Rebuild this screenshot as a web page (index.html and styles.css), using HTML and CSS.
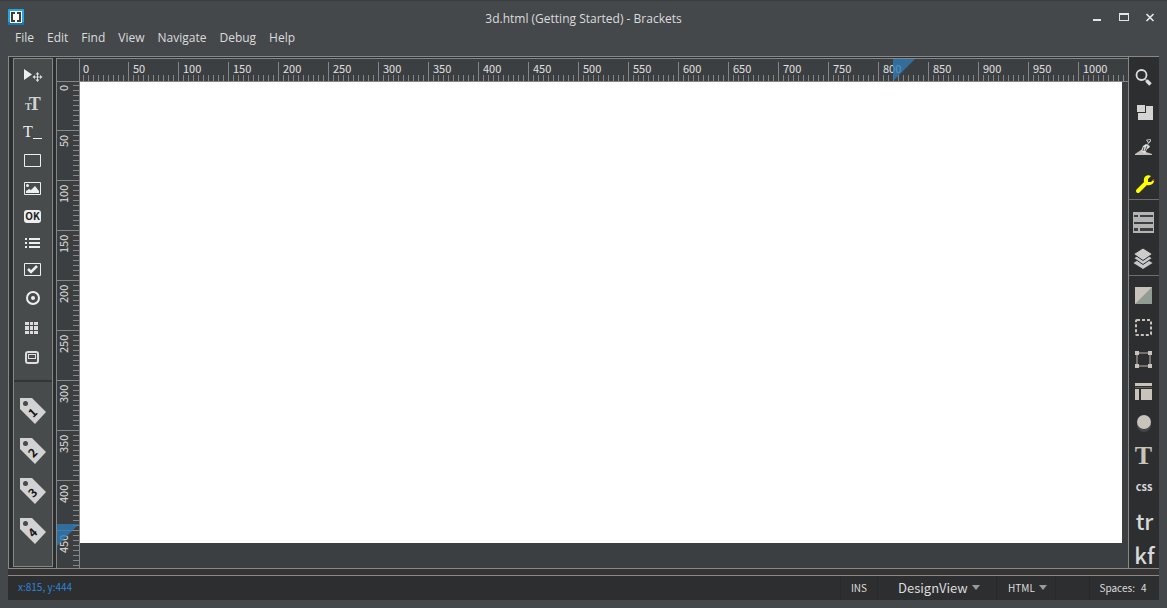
FILE: index.html
```
<!DOCTYPE html>
<html lang="en">
<head>
<meta charset="utf-8">
<title>3d.html (Getting Started) - Brackets</title>
<link rel="stylesheet" href="styles.css">
</head>
<body>
<header class="titlebar">
  <svg class="logo" width="16" height="16" viewBox="0 0 16 16"><rect width="16" height="16" rx="1" fill="#22a5e0"/><rect y="13" width="16" height="3" rx="1" fill="#0f78b8"/><rect x="2" y="2" width="12" height="12" fill="#fff"/><path d="M3 3h4v2H5v6h2v2H3zM13 3H9v2h2v6H9v2h4z" fill="#383c3e"/></svg>
  <h1 class="title">3d.html (Getting Started) - Brackets</h1>
  <div class="window-buttons">
    <button aria-label="Minimize"><svg width="12" height="12" viewBox="0 0 12 12"><path d="M3 8h8v2H3z" fill="#e4e4e4"/></svg></button>
    <button aria-label="Maximize"><svg width="12" height="12" viewBox="0 0 12 12"><path d="M2 2h10v8H2zM3 4v5h8V4z" fill="#e4e4e4" fill-rule="evenodd"/></svg></button>
    <button aria-label="Close"><svg width="12" height="12" viewBox="0 0 12 12"><path d="M2.500 3l7 7M9.500 3l-7 7" stroke="#e4e4e4" stroke-width="1.700"/></svg></button>
  </div>
</header>
<nav class="menu">
  <a href="#">File</a><a href="#">Edit</a><a href="#">Find</a><a href="#">View</a><a href="#">Navigate</a><a href="#">Debug</a><a href="#">Help</a>
</nav>

<main class="workspace">
  <aside class="toolbox">
    <div class="tools">
      <button aria-label="Select"><svg viewBox="0 0 38 28"><path d="M10 8v11l8-5.500z" fill="#eee"/><path d="M23.500 12.500v7M20 16h7" stroke="#ddd"/><path d="M23.500 11l2 2.500h-4zM23.500 21l2-2.500h-4zM18.500 16l2.500-2v4zM28.500 16l-2.500-2v4z" fill="#ddd"/></svg></button>
      <button aria-label="Text size"><svg viewBox="0 0 38 28"><text x="11" y="21" class="serif-glyph"><tspan font-size="10">T</tspan><tspan font-size="18" dx="-3">T</tspan></text></svg></button>
      <button aria-label="Text input"><svg viewBox="0 0 38 28"><text x="9" y="20" class="serif-light">T</text><path d="M19 21h9v1h-9z" fill="#eee"/></svg></button>
      <button aria-label="Box"><svg viewBox="0 0 38 28"><path d="M10.500 9.500h16v12h-16z" fill="none" stroke="#eee"/></svg></button>
      <button aria-label="Image"><svg viewBox="0 0 38 28"><path d="M10.500 9.500h16v12h-16z" fill="none" stroke="#eee"/><circle cx="13.500" cy="12.500" r="1.500" fill="#eee"/><path d="M12 20v-2l3-2 2 1 4-4 4 5v2z" fill="#eee"/></svg></button>
      <button aria-label="Button"><svg viewBox="0 0 38 28"><rect x="10" y="9" width="17" height="13" rx="3" fill="#eee"/><text x="18.500" y="19" class="ok-glyph" text-anchor="middle">OK</text></svg></button>
      <button aria-label="List"><svg viewBox="0 0 38 28"><path d="M11 9h2v2h-2zM11 13h2v2h-2zM11 17h2v2h-2zM15 9h11v2H15zM15 13h11v2H15zM15 17h11v2H15z" fill="#eee"/></svg></button>
      <button aria-label="Checkbox"><svg viewBox="0 0 38 28"><path d="M10.500 6.500h16v12h-16z" fill="none" stroke="#eee"/><path d="M14 12l3 3 6-6" fill="none" stroke="#eee" stroke-width="2.500"/></svg></button>
      <button aria-label="Radio"><svg viewBox="0 0 38 28"><circle cx="19" cy="13" r="6" fill="none" stroke="#eee" stroke-width="2"/><circle cx="19" cy="13" r="2" fill="#eee"/></svg></button>
      <button aria-label="Grid"><svg viewBox="0 0 38 28"><path d="M11 9h4v3h-4zM16 9h3v3h-3zM20 9h4v3h-4zM11 13h4v4h-4zM16 13h3v4h-3zM20 13h4v4h-4zM11 18h4v3h-4zM16 18h3v3h-3zM20 18h4v3h-4z" fill="#ddd"/></svg></button>
      <button aria-label="Container"><svg viewBox="0 0 38 28"><rect x="12" y="11" width="12" height="11" rx="2" fill="none" stroke="#ddd" stroke-width="2"/><rect x="14.500" y="13.500" width="7" height="4" fill="none" stroke="#ddd"/></svg></button>
    </div>
    <div class="tags">
      <button aria-label="Tag 1"><svg viewBox="0 0 38 40"><path d="M6 7h12l14 14-11 12L6 18z" fill="#d2d2d2"/><circle cx="11.500" cy="12.500" r="2.500" fill="#45494a"/><text x="19" y="26" transform="rotate(-45 19 22)" class="tag-number">1</text></svg></button>
      <button aria-label="Tag 2"><svg viewBox="0 0 38 40"><path d="M6 7h12l14 14-11 12L6 18z" fill="#d2d2d2"/><circle cx="11.500" cy="12.500" r="2.500" fill="#45494a"/><text x="19" y="26" transform="rotate(-45 19 22)" class="tag-number">2</text></svg></button>
      <button aria-label="Tag 3"><svg viewBox="0 0 38 40"><path d="M6 7h12l14 14-11 12L6 18z" fill="#d2d2d2"/><circle cx="11.500" cy="12.500" r="2.500" fill="#45494a"/><text x="19" y="26" transform="rotate(-45 19 22)" class="tag-number">3</text></svg></button>
      <button aria-label="Tag 4"><svg viewBox="0 0 38 40"><path d="M6 7h12l14 14-11 12L6 18z" fill="#d2d2d2"/><circle cx="11.500" cy="12.500" r="2.500" fill="#45494a"/><text x="19" y="26" transform="rotate(-45 19 22)" class="tag-number">4</text></svg></button>
    </div>
  </aside>

  <section class="design">
    <div class="corner"></div>
    <div class="ruler ruler-x">
      <span>0</span><span>50</span><span>100</span><span>150</span><span>200</span><span>250</span><span>300</span><span>350</span><span>400</span><span>450</span><span>500</span><span>550</span><span>600</span><span>650</span><span>700</span><span>750</span><span>800</span><span>850</span><span>900</span><span>950</span><span>1000</span>
      <i class="marker marker-x"></i>
    </div>
    <div class="ruler ruler-y">
      <span>0</span><span>50</span><span>100</span><span>150</span><span>200</span><span>250</span><span>300</span><span>350</span><span>400</span><span>450</span>
      <i class="marker marker-y"></i>
    </div>
    <div class="stage"><div class="canvas"></div></div>
  </section>

  <aside class="panel">
    <div class="group views">
      <button aria-label="Search"><svg viewBox="0 0 30 35"><circle cx="12.500" cy="16" r="5" fill="none" stroke="#ddd" stroke-width="1.800"/><path d="M16 20l2 2" stroke="#aaa" stroke-width="1.500"/><path d="M17.500 21.500l4 4" stroke="#ddd" stroke-width="3.500"/></svg></button>
      <button aria-label="Arrange"><svg viewBox="0 0 30 35"><path d="M8 11h8v7H8zM17 12h7v14H9v-7h8z" fill="#d4d4d4"/></svg></button>
      <button aria-label="Build"><svg viewBox="0 0 30 35"><path d="M6 26v-1l3-2 3-2 5 2 6 2v1z" fill="#c4c0bb"/><path d="M12 22l2-5 3-2 4 2-1 2-2 1-2 5z" fill="#dcdcdc"/><path d="M15 18l-1 4M18 17l-2 5" stroke="#555"/><path d="M18.500 16l2-4M17.500 11l4-.5v2l-2 1.500z" fill="none" stroke="#bbb"/></svg></button>
      <button aria-label="Settings"><svg viewBox="0 0 30 35"><path d="M9 27l8-8" stroke="#ff0" stroke-width="4" stroke-linecap="round"/><path d="M15 18c-1-5 3-8 7-6l-3 3v3h3l3-3c1 4-3 7-7 6z" fill="#ff0"/><path d="M24 15h1v2h-1z" fill="#e32"/></svg></button>
    </div>
    <div class="group lists">
      <button aria-label="Properties"><svg viewBox="0 0 30 36"><path d="M4 9h21v21H4z" fill="#b4b4b4"/><path d="M5 12h4v2H5zM11 12h13v2H11zM5 19h19v2H5zM5 25h4v3H5zM11 25h13v3H11z" fill="#3c3e3f"/></svg></button>
      <button aria-label="Layers"><svg viewBox="0 0 30 36"><path d="M4.500 24l9.500-6 9.500 6-9.500 6z" fill="#c8c8c8"/><path d="M4.500 19l9.500-5 9.500 5-9.500 6.500z" fill="#c8c8c8" stroke="#2d2e30"/><path d="M4.500 15L14 9l9.500 6-9.500 6.500z" fill="#ccc" stroke="#2d2e30"/></svg></button>
    </div>
    <div class="group styles">
      <button aria-label="Background"><svg viewBox="0 0 30 32"><path d="M6 8h17v17H6z" fill="#c8c4bc"/><path d="M23 8v17H6z" fill="#919c93"/></svg></button>
      <button aria-label="Border"><svg viewBox="0 0 30 32"><rect x="7" y="9" width="15" height="15" rx="1" fill="none" stroke="#c8c4bc" stroke-width="2" stroke-dasharray="3 2"/></svg></button>
      <button aria-label="Transform"><svg viewBox="0 0 30 32"><path d="M8 10h13v13H8z" fill="none" stroke="#8b8985" stroke-width="1.500"/><path d="M6 8h4v4H6zM19 8h4v4h-4zM6 21h4v4H6zM19 21h4v4h-4z" fill="#c8c4bc"/></svg></button>
      <button aria-label="Layout"><svg viewBox="0 0 30 32"><path d="M6 8h17v3H6zM6 14h4v11H6zM12 14h11v11H12z" fill="#c8c4bc"/><path d="M6 12h17v1H6z" fill="#5e5e5c"/></svg></button>
      <button aria-label="Shape"><svg viewBox="0 0 30 32"><circle cx="15" cy="18" r="7" fill="#424749"/><circle cx="15" cy="15" r="7" fill="#c8c4bc"/></svg></button>
      <button aria-label="Typography"><svg viewBox="0 0 30 32"><text x="14.500" y="25" text-anchor="middle" class="type-glyph">T</text></svg></button>
      <button class="label-css">css</button>
      <button class="label-large">tr</button>
      <button class="label-large">kf</button>
    </div>
  </aside>
</main>

<footer class="status">
  <span class="position">x:815, y:444</span>
  <span class="cell insert">INS</span>
  <label class="cell view"><select aria-label="View"><option>DesignView</option></select></label>
  <label class="cell language"><select aria-label="Language"><option>HTML</option></select></label>
  <span class="cell blank"></span>
  <span class="cell spaces"><span>Spaces:</span><span>4</span></span>
</footer>
</body>
</html>
```

FILE: styles.css
```
* { box-sizing: border-box; }
body {
  margin: 0;
  height: 100vh;
  padding: 0 8px 8px;
  display: flex;
  flex-direction: column;
  background: #44484b;
  border-top: 1px solid #3a3d3f;
  color: #dcdcdc;
  font: 12px/16px "Open Sans", sans-serif;
}
button, select {
  margin: 0;
  padding: 0;
  border: 0;
  background: none;
  color: inherit;
  font: inherit;
}
button { display: block; }
svg { display: block; }

.titlebar {
  display: grid;
  grid-template-columns: 1fr auto 1fr;
  align-items: center;
  height: 29px;
  padding-top: 2px;
}
.title { margin: 0; font-size: 12px; font-weight: 400; padding-top: 5px; }
.window-buttons { display: flex; justify-content: flex-end; gap: 15px; padding-right: 3px; }
.menu { display: flex; gap: 13px; height: 26px; padding: 0 7px; }
.menu a { color: inherit; text-decoration: none; }

.workspace {
  flex: 1;
  min-height: 0;
  display: flex;
  border: solid #888;
  border-width: 1px 0 0 1px;
  background: #2d2e30;
}
.toolbox {
  width: 40px;
  margin: 1px 3px 1px 4px;
  border: 1px solid #858787;
  background: #474b4b;
}
.tools { padding: 2px 0 11px; border-bottom: 2px solid #333637; }
.tools button, .tools svg { width: 38px; height: 28px; }
.tags { padding-top: 9px; }
.tags button, .tags svg { width: 38px; height: 40px; }
.serif-glyph { font-family: "Liberation Serif", serif; font-weight: 700; fill: #d0d3d3; }
.serif-light { font: 16px "Liberation Serif", serif; fill: #eee; }
.ok-glyph { font: 700 10px "Noto Sans CJK SC", sans-serif; fill: #222; }
.tag-number { font: 700 12px "Noto Sans CJK SC", sans-serif; fill: #151515; text-anchor: middle; }

.design {
  flex: 1;
  min-width: 0;
  margin-top: 1px;
  display: grid;
  grid-template: 23px minmax(0, 1fr) / 23px minmax(0, 1fr);
  border: solid #858787;
  border-width: 1px 0 0 1px;
  background: #3c3f41;
}
.corner { border: solid #858787; border-width: 0 1px 1px 0; }
.ruler {
  position: relative;
  display: flex;
  color: #e0e0e0;
  font: 11px/12px "Noto Sans CJK SC", sans-serif;
}
.ruler span { flex: 0 0 50px; }
.ruler span:first-of-type { flex-basis: 48px; }
.ruler-x {
  overflow: hidden;
  border-bottom: 1px solid #858787;
  padding-top: 3px;
  background: repeating-linear-gradient(to right, transparent 0 3px, #858787 3px 4px, transparent 4px 5px) 0 100% / 100% 6px no-repeat;
}
.ruler-x span { padding-left: 4px; border-left: 1px solid #858787; }
.ruler-x span:first-of-type { border-left: 0; padding-left: 3px; }
.ruler-y {
  flex-direction: column;
  border-right: 1px solid #858787;
  background: repeating-linear-gradient(to bottom, transparent 0 3px, #858787 3px 4px, transparent 4px 5px) 100% 0 / 6px 100% no-repeat;
}
.ruler-y span {
  writing-mode: vertical-rl;
  transform: rotate(180deg);
  padding-bottom: 4px;
  border-bottom: 1px solid #858787;
  text-align: end;
}
.ruler-y span:first-of-type { border-bottom: 0; padding-bottom: 3px; }
.ruler-y span:last-of-type { flex: 1 1 0; min-height: 0; }
.marker {
  position: absolute;
  width: 22px;
  height: 22px;
  background: #2e7ab5;
  opacity: .8;
  clip-path: polygon(0 0, 100% 0, 0 100%);
}
.marker-x { left: 813px; top: 0; }
.marker-y { left: 0; top: 442px; }
.stage { display: flex; padding: 0 6px 25px 0; }
.canvas { flex: 1; background: #fff; }

.panel {
  width: 31px;
  border-left: 1px solid #888;
  color: #d8d8d8;
  overflow: hidden;
}
.group { border-bottom: 1px solid #6c6e6f; }
.views { padding-top: 2px; }
.views button, .views svg { width: 30px; height: 35px; }
.lists { padding-top: 3px; }
.lists button, .lists svg { width: 30px; height: 36px; }
.styles { padding-top: 3px; border: 0; }
.styles button, .styles svg { width: 30px; height: 32px; }
.type-glyph { font: 700 26px "Liberation Serif", serif; fill: #c8c4bc; }
.styles .label-css { padding-bottom: 2px; font: 700 11px/30px "Noto Sans CJK SC", sans-serif; }
.styles .label-large { height: 34px; padding-left: 1px; font: 500 22px/32px "Noto Sans CJK SC", sans-serif; }

.status {
  display: flex;
  align-items: stretch;
  height: 32px;
  padding-top: 8px;
  background: linear-gradient(#888 0 1px, #353432 1px 7px, #888 7px 8px, #2d2e30 8px);
  font: 10px/22px "Noto Sans CJK SC", sans-serif;
}
.position { flex: 1; padding-left: 10px; color: #2e84d8; }
.cell { display: flex; align-items: center; justify-content: center; padding-bottom: 1px; border-left: 1px solid #28292b; }
.insert { width: 37px; }
.view { width: 119px; padding-left: 4px; font-size: 13px; }
.language { width: 59px; padding-left: 3px; }
.blank { width: 34px; }
.spaces { width: 70px; gap: 6px; padding-right: 3px; }
.cell select { appearance: none; }
.cell select option { color: #222; }
label.cell { gap: 4px; }
label.cell::after {
  content: "";
  border: solid transparent;
  border-width: 5px 4px 0;
  border-top-color: #9a9a9a;
}
```
